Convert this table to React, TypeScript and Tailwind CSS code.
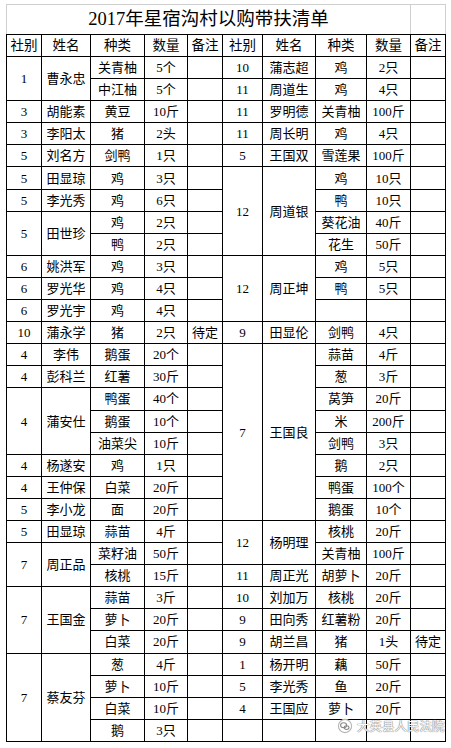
type Cell = { t: string; rs?: number };

const c = (t: string, rs?: number): Cell => ({ t, rs });

// left half and right half of each data row; cells covered by a rowSpan are left out
const rows: [Cell[], Cell[]][] = [
  [[c("1", 2), c("曹永忠", 2), c("关青柚"), c("5个"), c("")], [c("10"), c("蒲志超"), c("鸡"), c("2只"), c("")]],
  [[c("中江柚"), c("5个"), c("")], [c("11"), c("周道生"), c("鸡"), c("4只"), c("")]],
  [[c("3"), c("胡能素"), c("黄豆"), c("10斤"), c("")], [c("11"), c("罗明德"), c("关青柚"), c("100斤"), c("")]],
  [[c("3"), c("李阳太"), c("猪"), c("2头"), c("")], [c("11"), c("周长明"), c("鸡"), c("4只"), c("")]],
  [[c("5"), c("刘名方"), c("剑鸭"), c("1只"), c("")], [c("5"), c("王国双"), c("雪莲果"), c("100斤"), c("")]],
  [[c("5"), c("田显琼"), c("鸡"), c("3只"), c("")], [c("12", 4), c("周道银", 4), c("鸡"), c("10只"), c("")]],
  [[c("5"), c("李光秀"), c("鸡"), c("6只"), c("")], [c("鸭"), c("10只"), c("")]],
  [[c("5", 2), c("田世珍", 2), c("鸡"), c("2只"), c("")], [c("葵花油"), c("40斤"), c("")]],
  [[c("鸭"), c("2只"), c("")], [c("花生"), c("50斤"), c("")]],
  [[c("6"), c("姚洪军"), c("鸡"), c("3只"), c("")], [c("12", 3), c("周正坤", 3), c("鸡"), c("5只"), c("")]],
  [[c("6"), c("罗光华"), c("鸡"), c("4只"), c("")], [c("鸭"), c("5只"), c("")]],
  [[c("6"), c("罗光宇"), c("鸡"), c("4只"), c("")], [c(""), c(""), c("")]],
  [[c("10"), c("蒲永学"), c("猪"), c("2只"), c("待定")], [c("9"), c("田显伦"), c("剑鸭"), c("4只"), c("")]],
  [[c("4"), c("李伟"), c("鹅蛋"), c("20个"), c("")], [c("7", 8), c("王国良", 8), c("蒜苗"), c("4斤"), c("")]],
  [[c("4"), c("彭科兰"), c("红薯"), c("30斤"), c("")], [c("葱"), c("3斤"), c("")]],
  [[c("4", 3), c("蒲安仕", 3), c("鸭蛋"), c("40个"), c("")], [c("莴笋"), c("20斤"), c("")]],
  [[c("鹅蛋"), c("10个"), c("")], [c("米"), c("200斤"), c("")]],
  [[c("油菜尖"), c("10斤"), c("")], [c("剑鸭"), c("3只"), c("")]],
  [[c("4"), c("杨遂安"), c("鸡"), c("1只"), c("")], [c("鹅"), c("2只"), c("")]],
  [[c("4"), c("王仲保"), c("白菜"), c("20斤"), c("")], [c("鸭蛋"), c("100个"), c("")]],
  [[c("5"), c("李小龙"), c("面"), c("20斤"), c("")], [c("鹅蛋"), c("10个"), c("")]],
  [[c("5"), c("田显琼"), c("蒜苗"), c("4斤"), c("")], [c("12", 2), c("杨明理", 2), c("核桃"), c("20斤"), c("")]],
  [[c("7", 2), c("周正品", 2), c("菜籽油"), c("50斤"), c("")], [c("关青柚"), c("100斤"), c("")]],
  [[c("核桃"), c("15斤"), c("")], [c("11"), c("周正光"), c("胡萝卜"), c("20斤"), c("")]],
  [[c("7", 3), c("王国金", 3), c("蒜苗"), c("3斤"), c("")], [c("10"), c("刘加万"), c("核桃"), c("20斤"), c("")]],
  [[c("萝卜"), c("20斤"), c("")], [c("9"), c("田向秀"), c("红薯粉"), c("20斤"), c("")]],
  [[c("白菜"), c("20斤"), c("")], [c("9"), c("胡兰昌"), c("猪"), c("1头"), c("待定")]],
  [[c("7", 4), c("蔡友芬", 4), c("葱"), c("4斤"), c("")], [c("1"), c("杨开明"), c("藕"), c("50斤"), c("")]],
  [[c("萝卜"), c("10斤"), c("")], [c("5"), c("李光秀"), c("鱼"), c("20斤"), c("")]],
  [[c("白菜"), c("10斤"), c("")], [c("4"), c("王国应"), c("萝卜"), c("20斤"), c("")]],
  [[c("鹅"), c("3只"), c("")], [c(""), c(""), c(""), c(""), c("")]],
];

const widths = [35, 49, 54, 43, 35, 40, 53, 51, 44, 35];
const heads = ["社别", "姓名", "种类", "数量", "备注", "社别", "姓名", "种类", "数量", "备注"];

const td = "border border-black p-0 text-center align-middle leading-none";

const WatermarkIcon = () => (
  <svg width="16" height="16" viewBox="0 0 16 16" fill="none" stroke="#8a8a8a" strokeWidth="1.1">
    <circle cx="8" cy="8" r="6.6" stroke="#b5b5b5" />
    <ellipse cx="6.6" cy="7.2" rx="3" ry="2.4" />
    <ellipse cx="9.6" cy="9.6" rx="2.4" ry="1.9" />
  </svg>
);

export default function App() {
  return (
    <div className="relative bg-white w-[451px] h-[748px] pl-[6px] pt-[4px] text-black font-['Liberation_Serif','Noto_Sans_CJK_SC',serif]">
      <table className="table-fixed border-collapse w-[439px]">
        <colgroup>
          {widths.map((w, i) => (
            <col key={i} style={{ width: w }} />
          ))}
        </colgroup>
        <tbody>
          <tr className="h-[30px]">
            <td colSpan={9} className="border border-[#cfcfcf] border-b-black p-0 text-center align-middle text-[18.5px] leading-none">
              2017年星宿沟村以购带扶清单
            </td>
            <td className="border border-[#cfcfcf] border-b-black p-0" />
          </tr>
          <tr className="h-[22px]">
            {heads.map((h, i) => (
              <td key={i} className={`${td} text-[13.5px]`}>
                {h}
              </td>
            ))}
          </tr>
          {rows.map(([left, right], r) => (
            <tr key={r} className="h-[22.1px]">
              {[...left, ...right].map((cell, i) => (
                <td key={i} rowSpan={cell.rs} className={`${td} text-[13px]`}>
                  {cell.t}
                </td>
              ))}
            </tr>
          ))}
        </tbody>
      </table>
      <div className="absolute left-[337px] top-[718px] flex items-center gap-[4px] text-[12.5px] leading-none text-white font-['Noto_Sans_CJK_SC',sans-serif] [text-shadow:0_0_1px_#666,0_0_1px_#666]">
        <WatermarkIcon />
        <span>大英县人民法院</span>
      </div>
    </div>
  );
}
